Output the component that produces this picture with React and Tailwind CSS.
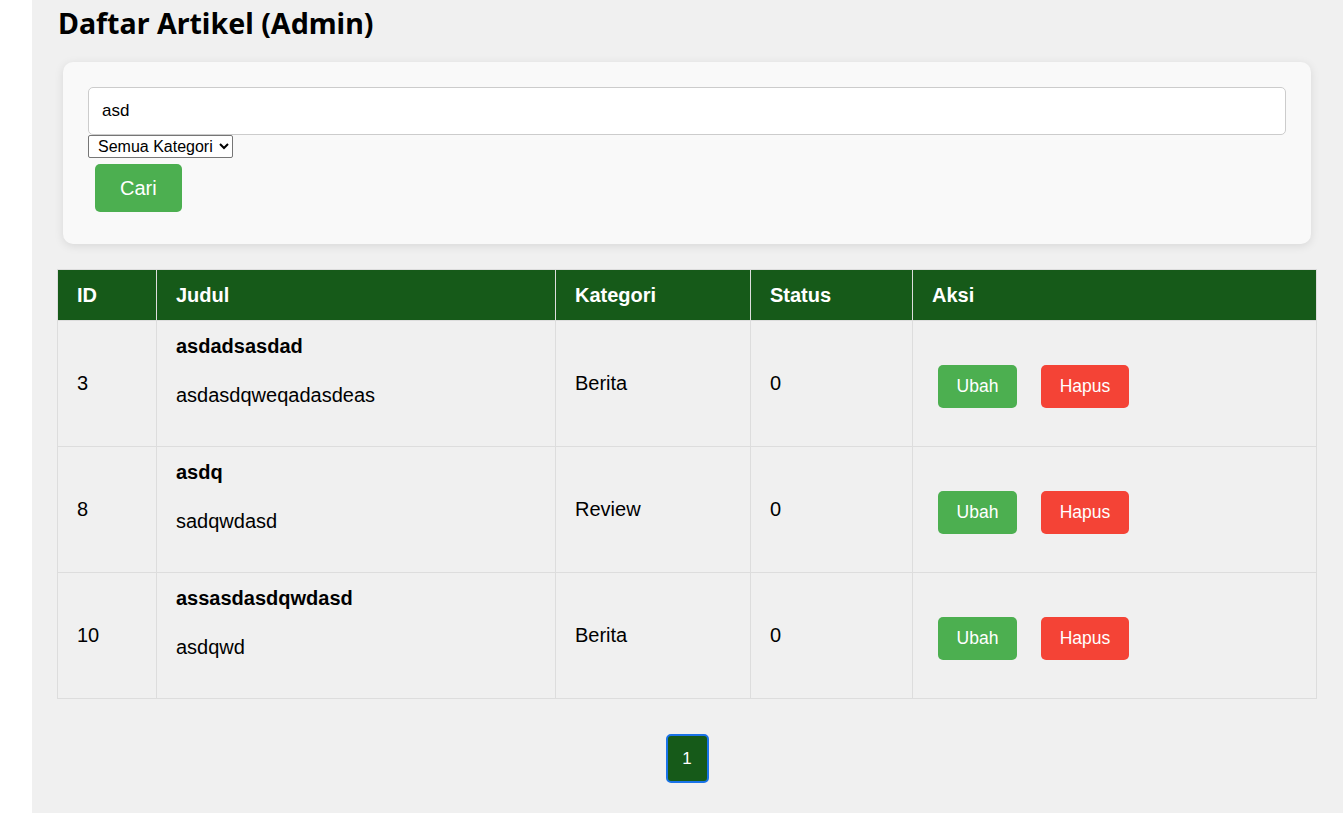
import React, { useState } from 'react';

const articles = [
    { id: 3, title: 'asdadsasdad', body: 'asdasdqweqadasdeas', category: 'Berita', status: 0 },
    { id: 8, title: 'asdq', body: 'sadqwdasd', category: 'Review', status: 0 },
    { id: 10, title: 'assasdasdqwdasd', body: 'asdqwd', category: 'Berita', status: 0 },
];

const App = () => {
    const [search, setSearch] = useState('asd');
    const [category, setCategory] = useState('');

    return (
        <div className="min-h-screen bg-white" style={{ fontFamily: '"Liberation Sans", Arial, sans-serif' }}>
            <div className="ml-[32px] h-[813px] bg-[#f0f0f0] pl-[25px] pr-[26px] pt-[4px]">
                <h1 className="text-[28.6px] font-bold text-black leading-[38px] ml-[1px]" style={{ fontFamily: '"Noto Sans", "Open Sans", sans-serif' }}>
                    Daftar Artikel (Admin)
                </h1>

                {/* Search */}
                <div className="mx-[6px] mt-[20px] bg-[#f9f9f9] rounded-[10px] shadow-[0_2px_10px_rgba(0,0,0,0.1)] px-[25px] pt-[25px] pb-[32px]">
                    <input
                        value={search}
                        onChange={e => setSearch(e.target.value)}
                        className="block w-full h-[48px] bg-white border border-[#ccc] rounded-[5px] px-[13px] text-[17px] text-black outline-none"
                    />
                    <select
                        value={category}
                        onChange={e => setCategory(e.target.value)}
                        className="block h-[23px] border border-[#767676] bg-white text-[16px] text-black pl-[5px] pr-[3px] rounded-[2px] leading-[18px]"
                        style={{ appearance: 'auto' }}
                    >
                        <option value="">Semua Kategori</option>
                        <option value="berita">Berita</option>
                        <option value="review">Review</option>
                    </select>
                    <button className="mt-[6px] ml-[7px] h-[48px] px-[25px] bg-[#4caf50] text-white text-[20px] rounded-[5px]">
                        Cari
                    </button>
                </div>

                {/* Table */}
                <table className="w-full mt-[25px] border-collapse text-[20px] text-black">
                    <thead>
                        <tr className="bg-[#165a19] text-white">
                            <th className="w-[99px] text-left font-bold px-[19px] py-[14px] border border-[#ddd] leading-[22px]">ID</th>
                            <th className="w-[399px] text-left font-bold px-[19px] py-[14px] border border-[#ddd] leading-[22px]">Judul</th>
                            <th className="w-[195px] text-left font-bold px-[19px] py-[14px] border border-[#ddd] leading-[22px]">Kategori</th>
                            <th className="w-[162px] text-left font-bold px-[19px] py-[14px] border border-[#ddd] leading-[22px]">Status</th>
                            <th className="text-left font-bold px-[19px] py-[14px] border border-[#ddd] leading-[22px]">Aksi</th>
                        </tr>
                    </thead>
                    <tbody>
                        {articles.map(a => (
                            <tr key={a.id}>
                                <td className="px-[19px] border border-[#ddd] align-middle leading-[23px]">{a.id}</td>
                                <td className="px-[19px] py-[14px] border border-[#ddd] align-middle leading-[23px]">
                                    <h3 className="font-bold mb-[26px]">{a.title}</h3>
                                    <p className="mb-[25px]">{a.body}</p>
                                </td>
                                <td className="px-[19px] border border-[#ddd] align-middle leading-[23px]">{a.category}</td>
                                <td className="px-[19px] border border-[#ddd] align-middle leading-[23px]">{a.status}</td>
                                <td className="px-[20px] border border-[#ddd] align-middle">
                                    <div className="flex items-center gap-[24px] ml-[5px] mt-[5px]">
                                        <button className="w-[79px] h-[43px] bg-[#4caf50] text-white text-[17.5px] rounded-[5px]">Ubah</button>
                                        <button className="w-[88px] h-[43px] bg-[#f44336] text-white text-[17.5px] rounded-[5px]">Hapus</button>
                                    </div>
                                </td>
                            </tr>
                        ))}
                    </tbody>
                </table>

                {/* Pagination */}
                <div className="flex justify-center mt-[35px]">
                    <button className="w-[43px] h-[49px] bg-[#165a19] text-white text-[17px] rounded-[5px] border-2 border-[#1a73e8]">
                        1
                    </button>
                </div>
            </div>
        </div>
    );
};

export default App;
